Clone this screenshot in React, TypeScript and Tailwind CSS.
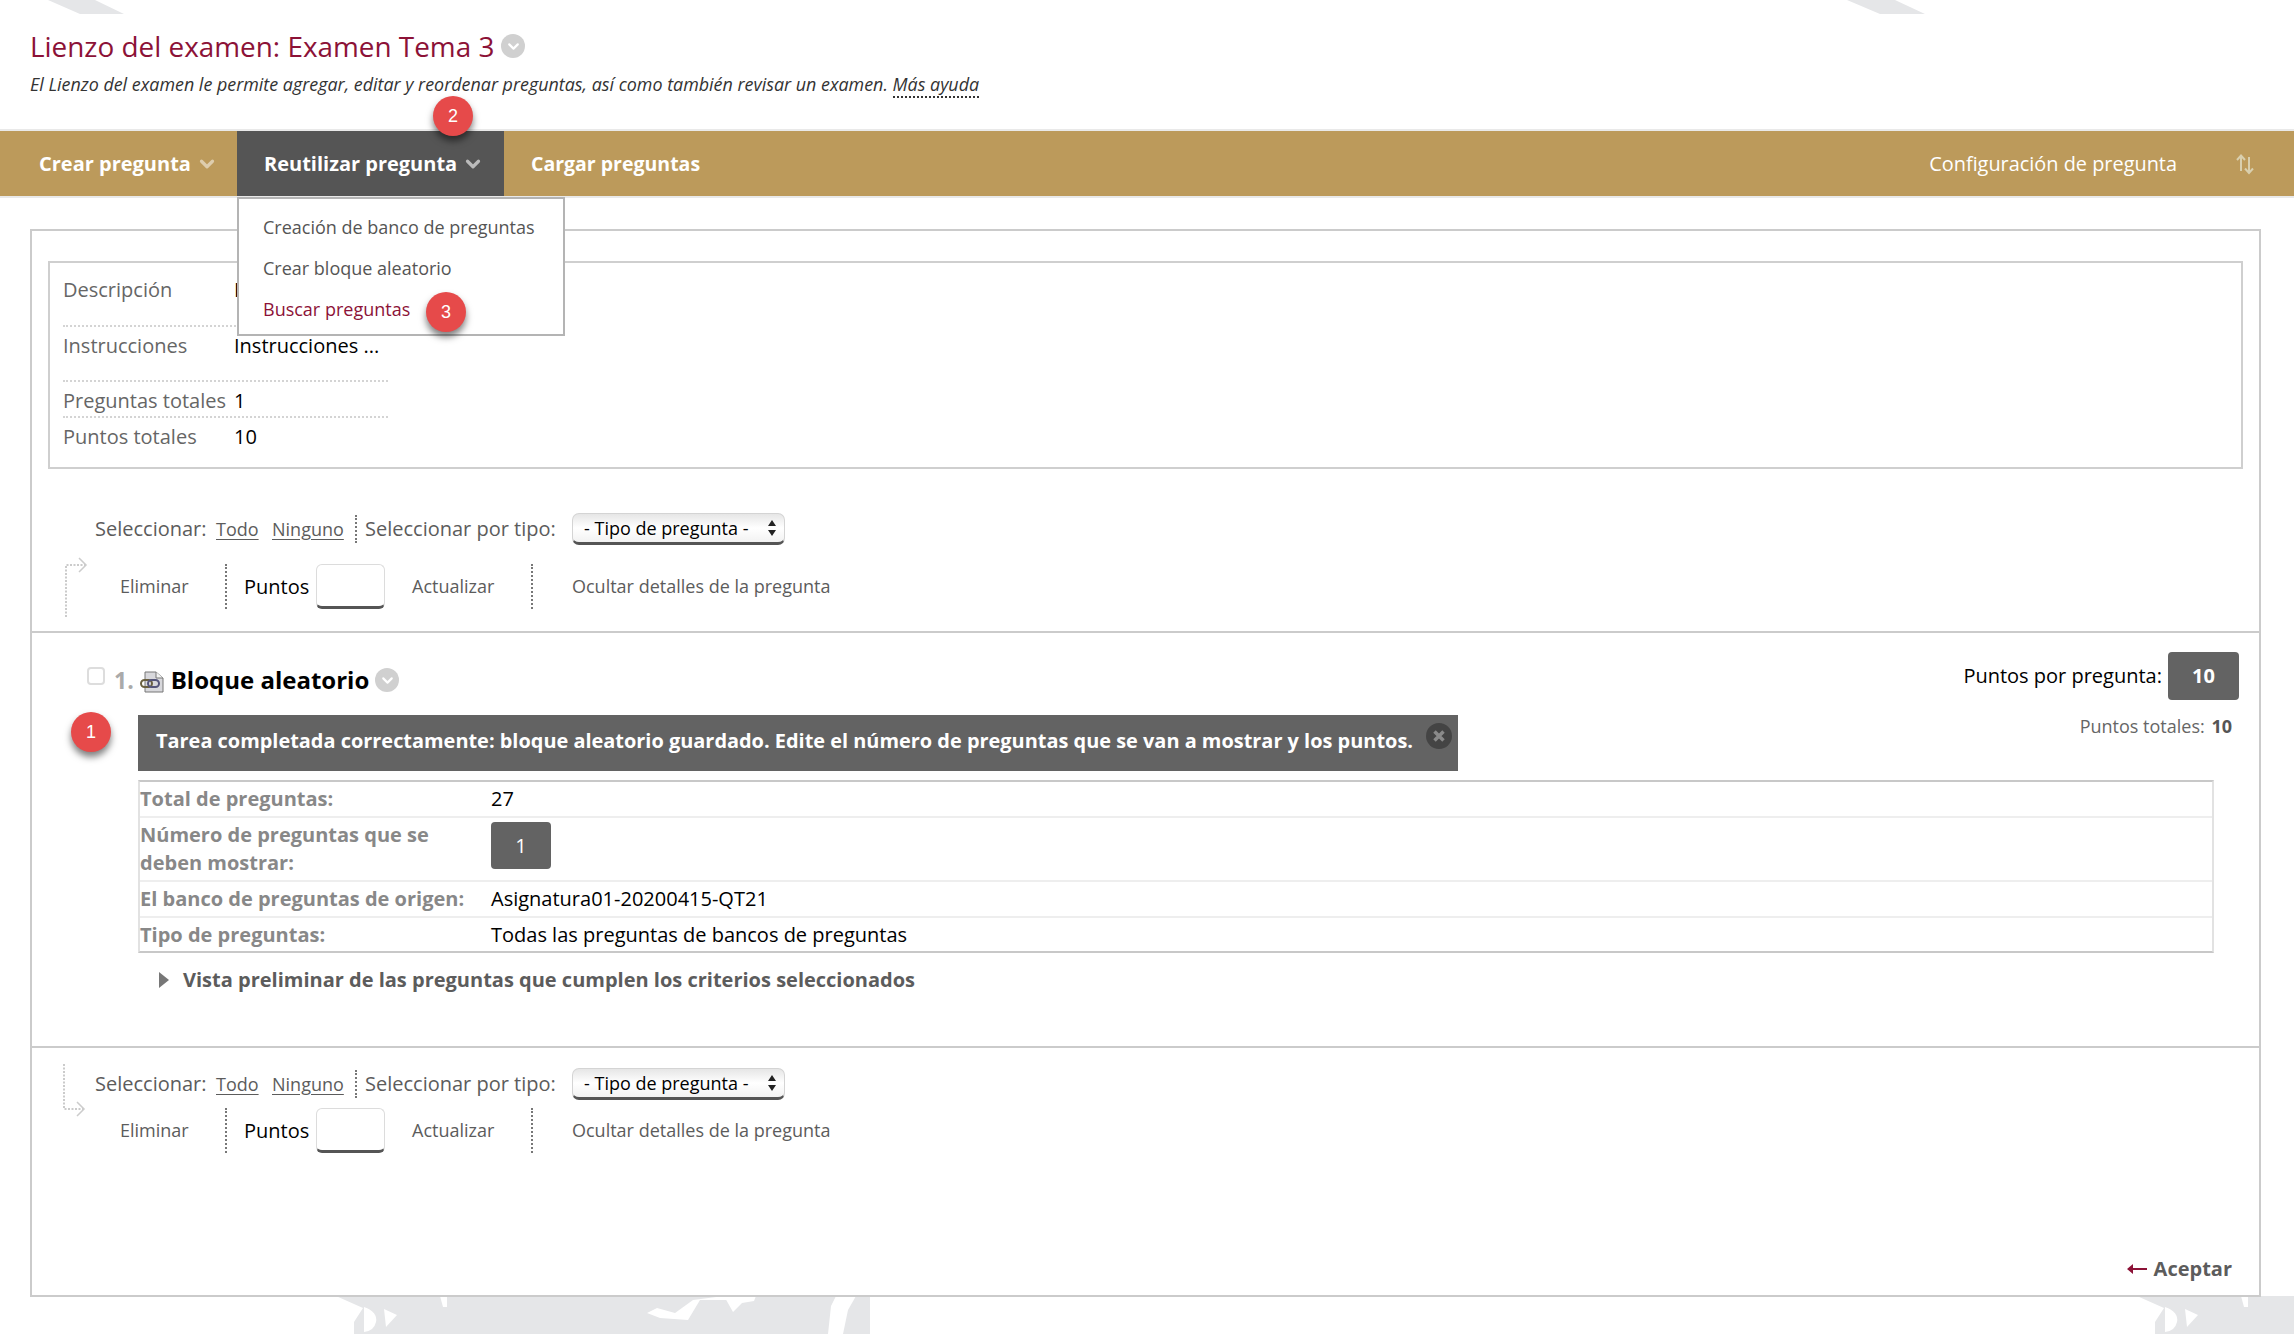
import React from "react";
import { ChevronDown } from "lucide-react";

function Badge({ n, className }: { n: string; className: string }) {
  return (
    <div
      className={`absolute flex h-10 w-10 items-center justify-center rounded-full bg-[#e64a4a] font-['Liberation_Sans',sans-serif] text-[18px] text-white shadow-[0_5px_7px_rgba(0,0,0,0.5)] ${className}`}
    >
      {n}
    </div>
  );
}

function ChevCircle({ className }: { className: string }) {
  return (
    <span className={`flex h-6 w-6 shrink-0 items-center justify-center rounded-full bg-[#d0d0d0] ${className}`}>
      <ChevronDown size={17} strokeWidth={3} className="text-white" />
    </span>
  );
}

function SelectBox() {
  return (
    <div className="ml-[16px] flex h-[32px] w-[213px] items-center justify-between rounded-[7px] border border-b-[3px] border-[#d4d4d4] border-b-[#555] bg-gradient-to-b from-[#e6e6e6] via-white to-[#f2f2f2] pl-[11px] pr-[7px] text-[18px] text-black">
      <span>- Tipo de pregunta -</span>
      <svg width="10" height="18" viewBox="0 0 10 18" className="shrink-0">
        <path d="M5 1 L9 7 H1 Z M5 17 L1 11 H9 Z" fill="#222" />
      </svg>
    </div>
  );
}

function SelectRow() {
  return (
    <div className="flex h-[32px] items-center text-[20px] text-[#5c5c5c]">
      <span className="w-[121px]">Seleccionar:</span>
      <a className="w-[56px] text-[18px] underline underline-offset-3">Todo</a>
      <a className="w-[83px] text-[18px] underline underline-offset-3">Ninguno</a>
      <span className="h-[28px] border-l-2 border-dotted border-[#777]" />
      <span className="ml-[8px] w-[191px] whitespace-nowrap">Seleccionar por tipo:</span>
      <SelectBox />
    </div>
  );
}

function ActionRow() {
  return (
    <div className="flex h-[45px] items-center text-[18px] text-[#5c5c5c]">
      <span className="ml-[25px] w-[105px]">Eliminar</span>
      <span className="h-[45px] border-l-2 border-dotted border-[#777]" />
      <span className="ml-[17px] w-[72px] text-[20px] text-black">Puntos</span>
      <input className="h-[45px] w-[69px] rounded-[6px] border border-b-[3px] border-[#dcdcdc] border-b-[#555] bg-white" aria-label="Puntos" />
      <span className="ml-[27px] w-[119px]">Actualizar</span>
      <span className="h-[45px] border-l-2 border-dotted border-[#777]" />
      <span className="ml-[39px]">Ocultar detalles de la pregunta</span>
    </div>
  );
}

function InfoRow({ label, value, className }: { label: string; value: string; className: string }) {
  return (
    <div className={`flex w-[325px] text-[20px] leading-[28px] ${className}`}>
      <span className="w-[171px] shrink-0 text-[#666]">{label}</span>
      <span className="text-black">{value}</span>
    </div>
  );
}

function DataRow({ label, children, className }: { label: string; children: React.ReactNode; className: string }) {
  return (
    <div className={`flex border-b-2 border-[#eeeeee] text-[20px] leading-[28px] last:border-b-0 ${className}`}>
      <span className="w-[351px] shrink-0 pr-[20px] font-bold text-[#888]">{label}</span>
      <div className="text-black">{children}</div>
    </div>
  );
}

function Backdrop() {
  const tile = (
    <>
      <path d="M336 1296 H870 V1334 H354 V1322 L363 1308 Z" fill="#e5e6e8" />
      <path d="M364 1307 Q378 1312 376 1322 Q374 1331 364 1332 Z M384 1309 L397 1315 L386 1327 Z M440 1296 H447 V1307 H443 Z" fill="#fff" />
      <path d="M647 1313 L657 1308 L675 1313 L693 1300 L724 1296 H735 L733 1300 L700 1300 L691 1315 L688 1320 L660 1318 Z" fill="#fff" />
      <path d="M724 1296 L733 1312 L742 1303 L754 1301 L756 1296 Z" fill="#fff" />
      <path d="M836 1296 L831 1306 L828 1334 H843 L848 1310 L856 1296 Z" fill="#fff" />
    </>
  );
  return (
    <svg className="absolute inset-0 h-[1334px] w-[2294px]" viewBox="0 0 2294 1334" aria-hidden="true">
      <path d="M48 0 H95 L124 14 H80 Z M1847 0 H1895 L1925 14 H1880 Z" fill="#e5e6e8" />
      {tile}
      <g transform="translate(1801 0)">{tile}</g>
    </svg>
  );
}

export default function App() {
  return (
    <div className="relative h-[1334px] w-full overflow-hidden bg-white font-['Open_Sans',sans-serif]">
      <Backdrop />
      <div className="relative">
        <header className="px-[30px] pt-[27px]">
          <h1 className="flex h-[38px] items-center gap-[7px] text-[27.9px] leading-[38px] text-[#8c1237]">
            Lienzo del examen: Examen Tema 3
            <ChevCircle className="" />
          </h1>
          <p className="mt-[7px] text-[17.9px] leading-[24px] text-[#333] italic">
            El Lienzo del examen le permite agregar, editar y reordenar preguntas, así como también revisar un examen.{" "}
            <a className="border-b-2 border-dotted border-[#333]">Más ayuda</a>
          </p>
        </header>

        <nav className="relative mt-[33px] flex h-[69px] border-y-2 border-[#e9e9e9] bg-[#bc9a5b] text-white">
          <div className="flex w-[237px] items-center pl-[39px] text-[20px] font-bold">
            Crear pregunta
            <ChevronDown size={22} strokeWidth={3.5} className="ml-[5px] text-white/50" />
          </div>
          <div className="flex w-[267px] items-center bg-[#555] pl-[27px] text-[20px] font-bold">
            Reutilizar pregunta
            <ChevronDown size={22} strokeWidth={3.5} className="ml-[5px] text-white/60" />
          </div>
          <div className="flex items-center pl-[27px] text-[19.5px] font-bold">Cargar preguntas</div>
          <div className="ml-auto flex items-center pr-[39px] text-[19.9px]">
            Configuración de pregunta
            <svg width="20" height="22" viewBox="0 0 20 22" className="ml-[58px]" fill="none" stroke="#d9cfae" strokeWidth="2">
              <path d="M6 18 V3 M2 7 L6 2.5 L10 7 M14 4 V20 M10 15.5 L14 20 L18 15.5" />
            </svg>
          </div>
          <Badge n="2" className="left-[433px] top-[-35px]" />
          <ul className="absolute left-[237px] top-[66px] z-10 w-[328px] border-2 border-[#b4b4b4] bg-white pt-[8px] pb-[4px] text-[18px] leading-[41px] text-[#555]">
            <li className="pl-[24px]">Creación de banco de preguntas</li>
            <li className="pl-[24px]">Crear bloque aleatorio</li>
            <li className="pl-[24px] text-[#8c1237]">Buscar preguntas</li>
            <Badge n="3" className="left-[187px] top-[93px]" />
          </ul>
        </nav>

        <main className="mx-[30px] mt-[31px] h-[1068px] w-[2231px] border-2 border-[#cbcbcb]">
          <section className="mx-[16px] mt-[30px] flex h-[208px] flex-col border-2 border-[#cfcfcf] pl-[13px]">
            <InfoRow label="Descripción" value="Descripción ..." className="h-[64px] border-b-2 border-dotted border-[#d4d4d4] pt-[13px]" />
            <InfoRow label="Instrucciones" value="Instrucciones ..." className="h-[55px] border-b-2 border-dotted border-[#d4d4d4] pt-[5px]" />
            <InfoRow label="Preguntas totales" value="1" className="h-[36px] border-b-2 border-dotted border-[#d4d4d4] pt-[5px]" />
            <InfoRow label="Puntos totales" value="10" className="pt-[5px]" />
          </section>

          <section className="mt-[44px] flex h-[118px]">
            <svg width="24" height="62" viewBox="0 0 24 62" fill="none" className="ml-[33px] mt-[43px] shrink-0">
              <path d="M1 61 V9 H20" stroke="#bbb" strokeDasharray="2 1.5" strokeWidth="1.5" />
              <path d="M14 2 L21 9 L14 16" stroke="#ccc" strokeWidth="1.5" />
            </svg>
            <div className="ml-[6px] flex flex-col gap-[19px]">
              <SelectRow />
              <ActionRow />
            </div>
          </section>

          <section className="relative border-t-2 border-[#cbcbcb] pt-[19px] pb-[52px]">
            <div className="flex h-[48px] justify-between">
              <div className="flex h-[48px] items-center pl-[55px] pt-[8px]">
                <span className="mb-[8px] h-[18px] w-[18px] rounded-[4px] border-2 border-[#ddd]" />
                <span className="ml-[9px] text-[23px] font-bold text-[#aaa]">1.</span>
                <svg width="24" height="22" viewBox="0 0 24 22" className="ml-[6px] mt-[4px]">
                  <path d="M5 1 H16 L23 7 V21 H5 Z" fill="#d8d8dc" stroke="#777" />
                  <path d="M16 1 V7 H23" fill="#f2f2f2" stroke="#777" />
                  <rect x="1" y="9" width="11" height="7" rx="3.5" fill="none" stroke="#6a6040" strokeWidth="2" />
                  <rect x="8" y="9" width="11" height="7" rx="3.5" fill="none" stroke="#55557a" strokeWidth="2" />
                </svg>
                <span className="ml-[7px] text-[24px] font-bold text-black">Bloque aleatorio</span>
                <ChevCircle className="ml-[6px]" />
              </div>
              <div className="flex items-center pr-[20px]">
                <span className="text-[20px] text-black">Puntos por pregunta:</span>
                <span className="ml-[6px] flex h-[48px] w-[71px] items-center justify-center rounded-[4px] bg-[#636363] text-[20px] font-bold text-white">10</span>
              </div>
            </div>

            <div className="mt-[15px] flex items-start justify-between pr-[27px] pl-[106px]">
              <div className="flex h-[56px] w-[1320px] items-start bg-[#636363] pt-[11px] pl-[18px] text-[19.93px] font-bold text-white">
                <span>Tarea completada correctamente: bloque aleatorio guardado. Edite el número de preguntas que se van a mostrar y los puntos.</span>
                <span className="absolute left-[1394px] top-[90px] flex h-[26px] w-[26px] items-center justify-center rounded-full bg-[#444]">
                  <svg width="14" height="14" viewBox="0 0 14 14">
                    <path d="M2.5 2.5 L11.5 11.5 M11.5 2.5 L2.5 11.5" stroke="#8a8a8a" strokeWidth="3.5" />
                  </svg>
                </span>
              </div>
              <div className="text-[18px] leading-[22px] text-[#666]">
                Puntos totales: <b className="ml-[2px] text-[#555]">10</b>
              </div>
            </div>
            <Badge n="1" className="left-[39px] top-[79px]" />

            <div className="ml-[106px] mt-[9px] h-[173px] w-[2076px] border-y-2 border-x-2 border-y-[#c8c8c8] border-x-[#e2e2e2]">
              <DataRow label="Total de preguntas:" className="h-[36px] pt-[3px]">27</DataRow>
              <DataRow label="Número de preguntas que se deben mostrar:" className="h-[64px] pt-[3px]">
                <span className="mt-[1px] flex h-[47px] w-[60px] items-center justify-center rounded-[4px] bg-[#636363] text-white">1</span>
              </DataRow>
              <DataRow label="El banco de preguntas de origen:" className="h-[36px] pt-[3px]">Asignatura01-20200415-QT21</DataRow>
              <DataRow label="Tipo de preguntas:" className="pt-[3px]">Todas las preguntas de bancos de preguntas</DataRow>
            </div>

            <div className="ml-[127px] mt-[13px] flex h-[28px] items-center text-[20px] font-bold text-[#5c5c5c]">
              <svg width="10" height="16" viewBox="0 0 10 16">
                <path d="M0 0 L10 8 L0 16 Z" fill="#777" />
              </svg>
              <span className="ml-[14px]">Vista preliminar de las preguntas que cumplen los criterios seleccionados</span>
            </div>
          </section>

          <section className="flex h-[106px] border-t-2 border-[#cbcbcb] pt-[16px]">
            <svg width="24" height="62" viewBox="0 0 24 62" fill="none" className="ml-[31px] shrink-0">
              <path d="M1 0 V45 H20" stroke="#bbb" strokeDasharray="2 1.5" strokeWidth="1.5" />
              <path d="M14 38 L21 45 L14 52" stroke="#ccc" strokeWidth="1.5" />
            </svg>
            <div className="ml-[8px] mt-[4px] flex flex-col gap-[8px]">
              <SelectRow />
              <ActionRow />
            </div>
          </section>

          <div className="mt-[102px] flex items-center justify-end pr-[27px] text-[20px] font-bold text-[#5c5c5c]">
            <svg width="20" height="10" viewBox="0 0 20 10" className="mr-[7px]">
              <path d="M0 5 L6 0 V4 H20 V6 H6 V10 Z" fill="#8c1237" />
            </svg>
            Aceptar
          </div>
        </main>
      </div>
    </div>
  );
}
